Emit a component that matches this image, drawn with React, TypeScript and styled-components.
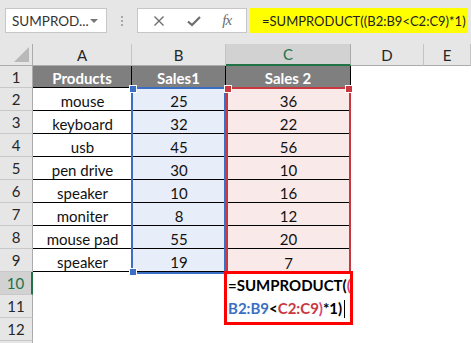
import React from "react";
import styled, { createGlobalStyle } from "styled-components";

const GlobalStyle = createGlobalStyle`
  body {
    margin: 0;
    background: #ffffff;
    font-family: Lato, "Liberation Sans", sans-serif;
    overflow: hidden;
  }
`;

const Toolbar = styled.div`
  height: 44px;
  box-sizing: border-box;
  background: #e6e6e6;
  display: flex;
  align-items: flex-start;
  padding: 8px 3px 0 5px;
`;

const NameBox = styled.div`
  flex: 0 0 102px;
  height: 25px;
  box-sizing: border-box;
  background: #fff;
  border: 1px solid #c6c6c6;
  display: flex;
  align-items: center;
  justify-content: space-between;
  padding: 0 8px 0 6px;
  font-size: 13.5px;
  color: #333;
`;

const DropArrow = styled.span`
  width: 0;
  height: 0;
  border-left: 4px solid transparent;
  border-right: 4px solid transparent;
  border-top: 4px solid #777;
`;

const Grip = styled.div`
  flex: 0 0 30px;
  height: 25px;
  display: flex;
  flex-direction: column;
  align-items: center;
  justify-content: center;
  gap: 2px;

  span {
    width: 2px;
    height: 2px;
    background: #a8a8a8;
  }
`;

const FuncBox = styled.div`
  flex: 0 0 110px;
  height: 25px;
  box-sizing: border-box;
  background: #fff;
  border: 1px solid #c6c6c6;
  display: flex;
  align-items: center;
  justify-content: space-around;
  padding: 0 4px;
  color: #6d6d6d;
`;

const Fx = styled.span`
  font-family: "Liberation Serif", serif;
  font-style: italic;
  font-size: 15px;
  color: #6d6d6d;
  letter-spacing: -1px;
`;

const FormulaInput = styled.div`
  flex: 1;
  min-width: 0;
  margin-left: 3px;
  height: 25px;
  background: #ffff00;
  display: flex;
  align-items: center;
  padding-left: 12px;
  font-size: 13px;
  color: #222;
  white-space: nowrap;
  overflow: hidden;
`;

const Sheet = styled.div`
  display: grid;
  grid-template-columns: 33px 99px 94px 125px 73px 1fr;
  grid-template-rows: 22px 22px repeat(12, 23px);
`;

const Place = styled.div<{ $r: number; $c: number }>`
  grid-row: ${(p) => p.$r};
  grid-column: ${(p) => p.$c};
  box-sizing: border-box;
`;

const Corner = styled(Place)`
  background: #e6e6e6;
  border-right: 1px solid #ababab;
  border-bottom: 1px solid #ababab;
  display: flex;
  align-items: flex-end;
  justify-content: flex-end;
  padding: 0 3px 3px 0;

  &::after {
    content: "";
    width: 0;
    height: 0;
    border-left: 15px solid transparent;
    border-bottom: 15px solid #b9b9b9;
  }
`;

const ColHead = styled(Place)<{ $sel?: boolean }>`
  background: ${(p) => (p.$sel ? "#d2d2d2" : "#e6e6e6")};
  color: ${(p) => (p.$sel ? "#217346" : "#262626")};
  border-right: 1px solid ${(p) => (p.$sel ? "#ababab" : "#c4c4c4")};
  border-bottom: ${(p) => (p.$sel ? "2px solid #217346" : "1px solid #ababab")};
  display: flex;
  align-items: center;
  justify-content: center;
  font-size: 15px;
`;

const RowHead = styled(Place)<{ $sel?: boolean }>`
  background: ${(p) => (p.$sel ? "#d2d2d2" : "#e6e6e6")};
  color: ${(p) => (p.$sel ? "#217346" : "#262626")};
  border-bottom: 1px solid #c8c8c8;
  border-right: ${(p) => (p.$sel ? "2px solid #217346" : "1px solid #ababab")};
  display: flex;
  align-items: center;
  justify-content: center;
  font-size: 15px;
`;

const Cell = styled(Place)<{ $fill?: string; $line?: boolean }>`
  background: ${(p) => p.$fill || "#ffffff"};
  border-bottom: ${(p) => (p.$line ? "1px solid #000" : "none")};
  display: flex;
  align-items: flex-end;
  justify-content: center;
  font-size: 15px;
  line-height: 18px;
  color: #111;
`;

const HeadCell = styled(Cell)`
  background: #7f7f7f;
  border-right: 1px solid #000;
  color: #fff;
  font-weight: 700;
`;

const Range = styled.div<{ $col: number; $color: string; $shift: number }>`
  grid-column: ${(p) => p.$col};
  grid-row: 3 / span 8;
  margin: -1px 0 -2px ${(p) => p.$shift}px;
  border: 2px solid ${(p) => p.$color};
  position: relative;
  pointer-events: none;
  z-index: 1;
`;

const Handle = styled.span<{ $color: string; $x: "left" | "right"; $y: "top" | "bottom" }>`
  position: absolute;
  ${(p) => p.$x}: -4px;
  ${(p) => p.$y}: -4px;
  width: 6px;
  height: 6px;
  background: ${(p) => p.$color};
  border: 1px solid #fff;
`;

const Editor = styled.div`
  grid-column: 4;
  grid-row: 11 / span 3;
  align-self: start;
  margin: -1px -2px 0 -2px;
  border: 3px solid #ff0000;
  background: #fff;
  padding: 0 0 2px 1px;
  z-index: 2;
  font-weight: 700;
  font-size: 15px;
  line-height: 23px;
  color: #000;
  white-space: nowrap;
`;

const Ref = styled.span<{ $color: string }>`
  color: ${(p) => p.$color};
`;

const Caret = styled.span`
  display: inline-block;
  width: 1px;
  height: 18px;
  margin-left: 2px;
  background: #000;
  vertical-align: -4px;
`;

const rows: [string, number, number][] = [
  ["mouse", 25, 36],
  ["keyboard", 32, 22],
  ["usb", 45, 56],
  ["pen drive", 30, 10],
  ["speaker", 10, 16],
  ["moniter", 8, 12],
  ["mouse pad", 55, 20],
  ["speaker", 19, 7],
];

const BLUE = "#3a6fc4";
const RED = "#c9383f";
const PINK = "#d8467a";

export default function App() {
  return (
    <>
      <GlobalStyle />
      <Toolbar>
        <NameBox>
          <span>SUMPROD...</span>
          <DropArrow />
        </NameBox>
        <Grip>
          <span />
          <span />
          <span />
        </Grip>
        <FuncBox>
          <svg width="12" height="12" viewBox="0 0 12 12">
            <path d="M1.5 1.5 L10.5 10.5 M10.5 1.5 L1.5 10.5" stroke="#6d6d6d" strokeWidth="1.4" />
          </svg>
          <svg width="14" height="12" viewBox="0 0 14 12">
            <path d="M1 6.5 L5 10 L13 2" stroke="#6d6d6d" strokeWidth="2.2" fill="none" />
          </svg>
          <Fx>fx</Fx>
        </FuncBox>
        <FormulaInput>=SUMPRODUCT((B2:B9&lt;C2:C9)*1)</FormulaInput>
      </Toolbar>

      <Sheet>
        <Corner $r={1} $c={1} />
        {["A", "B", "C", "D", "E"].map((l, i) => (
          <ColHead key={l} $r={1} $c={i + 2} $sel={l === "C"}>
            {l}
          </ColHead>
        ))}

        {Array.from({ length: 13 }, (_, i) => (
          <RowHead key={i} $r={i + 2} $c={1} $sel={i + 1 === 10}>
            {i < 12 ? i + 1 : ""}
          </RowHead>
        ))}

        <HeadCell $r={2} $c={2} $line>Products</HeadCell>
        <HeadCell $r={2} $c={3} $line>Sales1</HeadCell>
        <HeadCell $r={2} $c={4} $line>Sales 2</HeadCell>

        {rows.map(([name, s1, s2], i) => (
          <React.Fragment key={i}>
            <Cell $r={i + 3} $c={2} $line>{name}</Cell>
            <Cell $r={i + 3} $c={3} $line $fill="#e8eef9">{s1}</Cell>
            <Cell $r={i + 3} $c={4} $line={i < 7} $fill="#fae9e9">{s2}</Cell>
          </React.Fragment>
        ))}

        <Range $col={3} $color={BLUE} $shift={-1}>
          <Handle $color={BLUE} $x="left" $y="top" />
          <Handle $color={BLUE} $x="left" $y="bottom" />
        </Range>
        <Range $col={4} $color={RED} $shift={0}>
          <Handle $color={RED} $x="left" $y="top" />
          <Handle $color={RED} $x="right" $y="top" />
        </Range>

        <Editor>
          =SUMPRODUCT(<Ref $color={PINK}>(</Ref>
          <br />
          <Ref $color={BLUE}>B2:B9</Ref>&lt;<Ref $color={RED}>C2:C9</Ref>
          <Ref $color={PINK}>)</Ref>*1)
          <Caret />
        </Editor>
      </Sheet>
    </>
  );
}
